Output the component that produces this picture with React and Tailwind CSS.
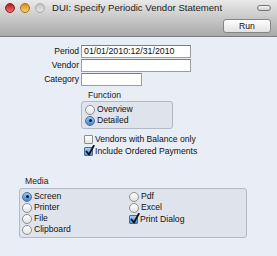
import React from 'react';

const font = { fontFamily: '"Liberation Sans", Arial, sans-serif' };

const Radio = ({ on, label }) => (
  <div className="flex items-center h-[11px] gap-[2px]">
    <span className={`w-[10px] h-[10px] rounded-full border flex items-center justify-center shrink-0 ${on ? 'border-[#4a6f9e] bg-gradient-to-b from-[#9cc6f2] to-[#3f86d8]' : 'border-[#8e8e8e] bg-gradient-to-b from-[#ffffff] to-[#e3e3e3]'}`}>
      {on && <span className="w-[3px] h-[3px] rounded-full bg-[#111]" />}
    </span>
    <span className="text-[8.6px] text-[#111] leading-none">{label}</span>
  </div>
);

const Check = ({ on, label }) => (
  <div className="flex items-center h-[12px] gap-[2px]">
    <span className={`relative w-[9px] h-[9px] rounded-[1px] border shrink-0 ${on ? 'border-[#4a6f9e] bg-gradient-to-b from-[#a6cdf4] to-[#4a8fdc]' : 'border-[#8e8e8e] bg-gradient-to-b from-[#ffffff] to-[#e6e6e6]'}`}>
      {on && (
        <svg className="absolute left-[0px] top-[-3px]" width="10" height="11" viewBox="0 0 10 11">
          <path d="M1.5 6.5 L4 9.5 L8.8 0.8" fill="none" stroke="#111" strokeWidth="1.8" strokeLinecap="round" strokeLinejoin="round" />
        </svg>
      )}
    </span>
    <span className="text-[8.6px] text-[#111] leading-none">{label}</span>
  </div>
);

const Field = ({ label, value, width }) => (
  <div className="flex items-center h-[13px] mb-[1px]">
    <span className="w-[80px] pr-[1px] text-right text-[8.6px] text-[#111] leading-none">{label}</span>
    <div className={`${width} h-[13px] ml-[1px] bg-white border border-[#9c9c9c] border-t-[#7c7c7c] flex items-center px-[2px] text-[8.8px] text-[#111] leading-none`}>
      {value}
    </div>
  </div>
);

export default function App() {
  return (
    <div className="w-[277px] h-[256px] flex flex-col bg-[#e8edf6] overflow-hidden" style={font}>
      <div className="h-[37px] bg-gradient-to-b from-[#e9e9e9] to-[#a9a9a9] border-b border-[#7e7e7e] flex flex-col">
        <div className="h-[15px] flex items-center pl-[5px] pr-[6px]">
          <span className="w-[10px] h-[10px] rounded-full bg-gradient-to-b from-[#b01818] to-[#f07070] border border-[#8a2020]" />
          <span className="w-[10px] h-[10px] ml-[5px] rounded-full bg-gradient-to-b from-[#d88a10] to-[#fbd36a] border border-[#a87018]" />
          <span className="w-[10px] h-[10px] ml-[5px] rounded-full bg-gradient-to-b from-[#c4c4c4] to-[#e4e4e4] border border-[#a8a8a8]" />
          <span className="ml-[7px] text-[9.6px] text-[#1e1e1e] leading-none">DUI: Specify Periodic Vendor Statement</span>
          <span className="ml-auto w-[14px] h-[6px] rounded-full border border-[#777] bg-gradient-to-b from-[#f4f4f4] to-[#cfcfcf]" />
        </div>
        <div className="flex justify-end pr-[6px] pt-[4px]">
          <button className="w-[48px] h-[14px] rounded-[3px] border border-[#858585] bg-gradient-to-b from-[#ffffff] to-[#e2e2e2] text-[8.6px] text-[#111] leading-none flex items-center justify-center">
            Run
          </button>
        </div>
      </div>

      <div className="flex flex-col pt-[8px]">
        <Field label="Period" value="01/01/2010:12/31/2010" width="w-[110px]" />
        <Field label="Vendor" value="" width="w-[110px]" />
        <Field label="Category" value="" width="w-[61px]" />

        <div className="ml-[81px] mt-[4px] flex flex-col">
          <span className="ml-[7px] text-[8.6px] text-[#222] leading-none h-[10px]">Function</span>
          <div className="w-[92px] h-[28px] rounded-[3px] border border-[#b3bac5] bg-[#dfe4ec] flex flex-col justify-center pl-[3px]">
            <Radio label="Overview" />
            <Radio on label="Detailed" />
          </div>
          <div className="flex flex-col mt-[4px] ml-[3px]">
            <Check label="Vendors with Balance only" />
            <Check on label="Include Ordered Payments" />
          </div>
        </div>

        <div className="ml-[19px] mt-[20px] flex flex-col">
          <span className="ml-[6px] text-[8.6px] text-[#222] leading-none h-[11px]">Media</span>
          <div className="w-[228px] h-[50px] rounded-[3px] border border-[#b3bac5] bg-[#dfe4ec] grid grid-cols-[107px_1fr] content-center pl-[2px]">
            <div className="flex flex-col">
              <Radio on label="Screen" />
              <Radio label="Printer" />
              <Radio label="File" />
              <Radio label="Clipboard" />
            </div>
            <div className="flex flex-col">
              <Radio label="Pdf" />
              <Radio label="Excel" />
              <Check on label="Print Dialog" />
            </div>
          </div>
        </div>
      </div>
    </div>
  );
}
